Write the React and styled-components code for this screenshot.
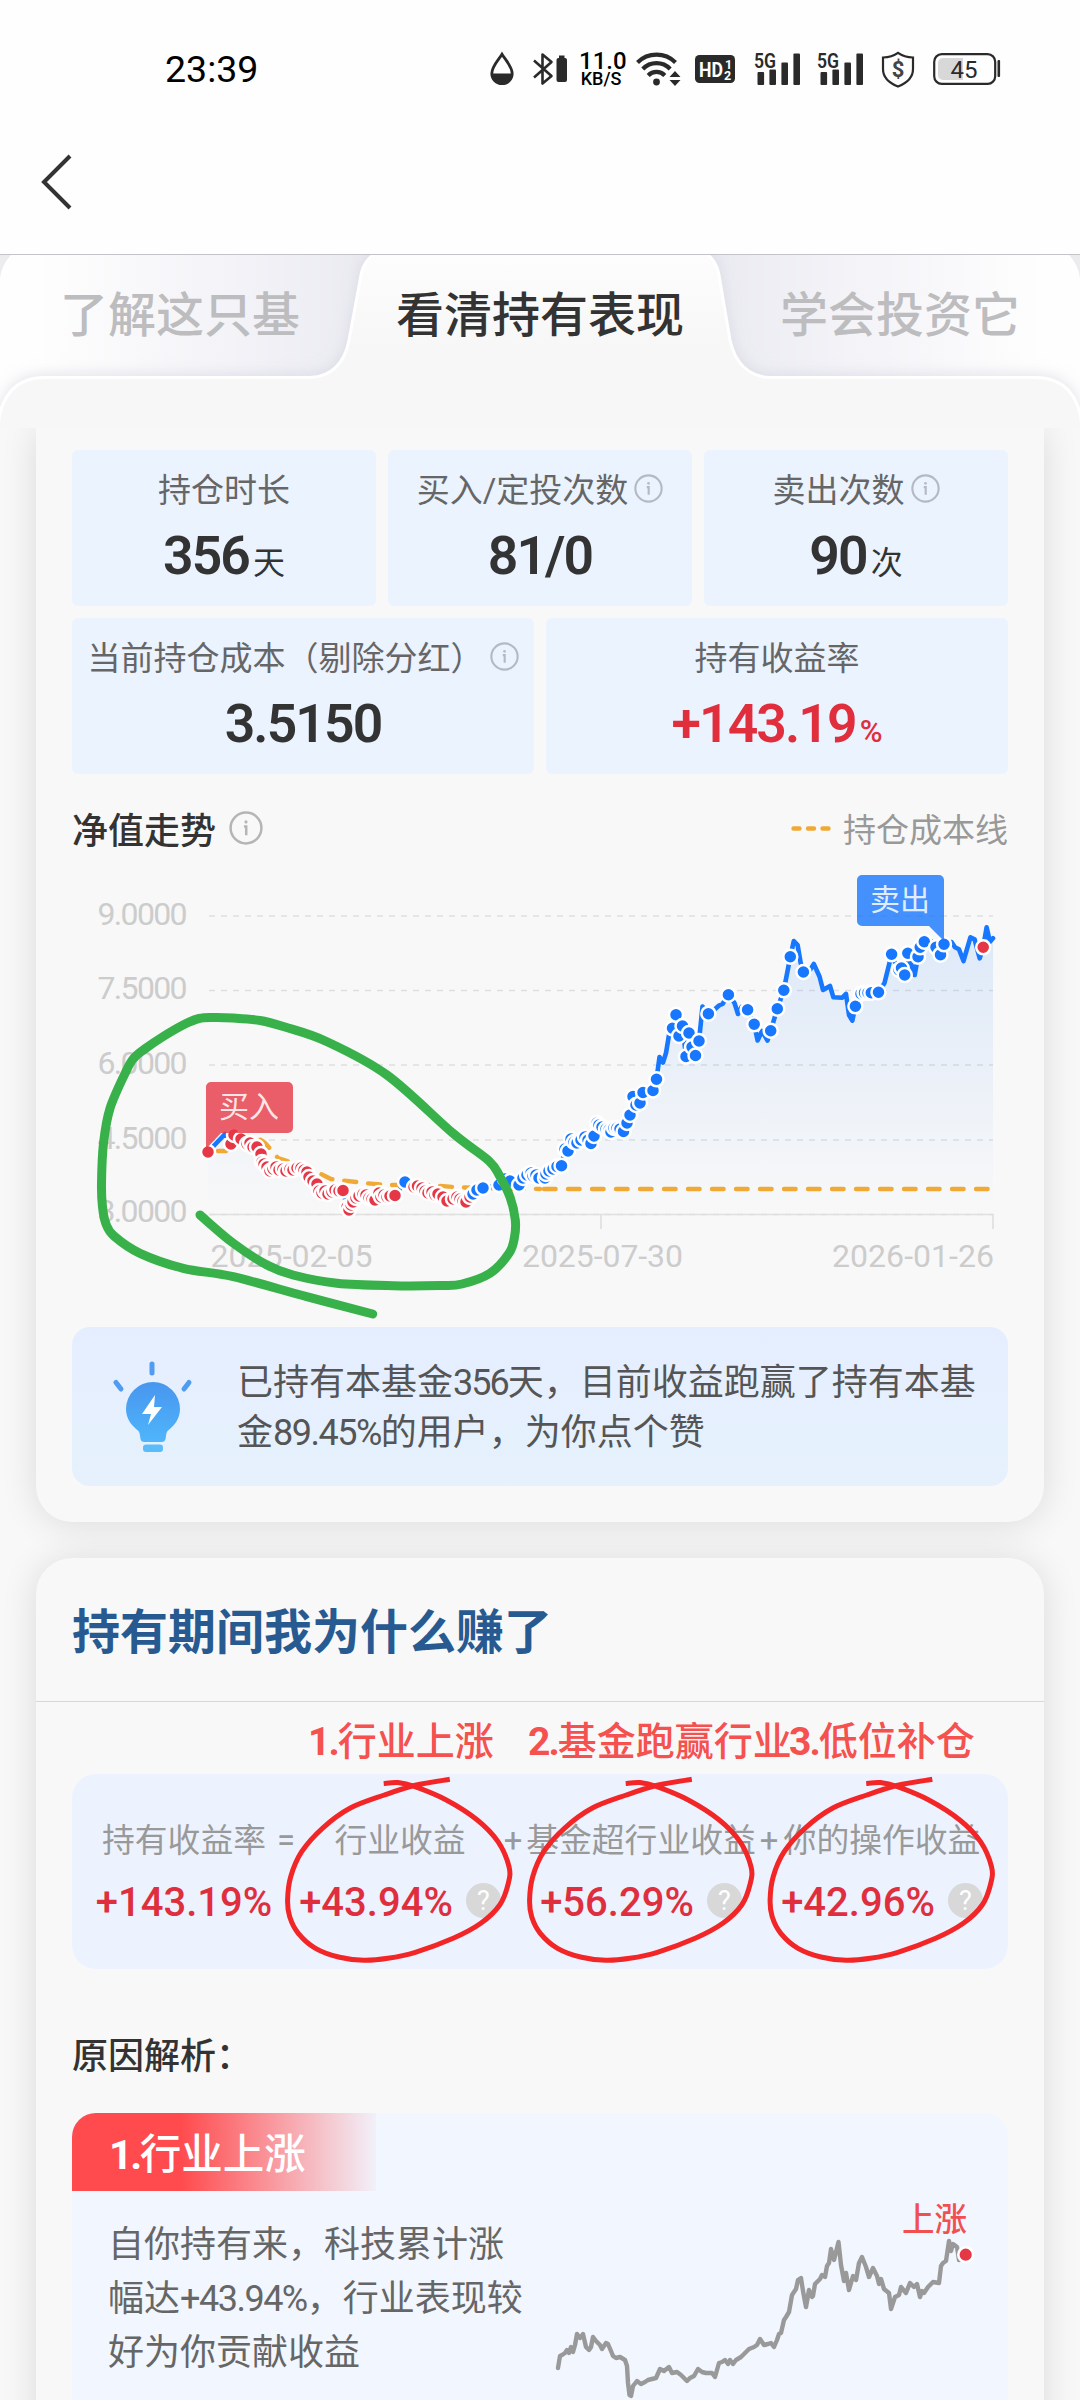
import styled, { createGlobalStyle } from "styled-components";

const GlobalStyle = createGlobalStyle`
  * {
    box-sizing: border-box;
  }

  body {
    margin: 0;
    background: #f7f7f7;
    color: #333;
    font-family: Roboto, "Noto Sans CJK SC", sans-serif;
  }

  svg {
    display: block;
    flex: none;
    overflow: visible;
  }
`;

/* ---------- layout ---------- */

const Page = styled.div`
  width: 1080px;
  height: 2400px;
  overflow: hidden;
  background: #f8f8f8;
`;

const Header = styled.header`
  height: 255px;
  background: #fefefe;
  border-bottom: 1px solid #c4c4c8;
`;

const StatusBar = styled.div`
  display: flex;
  align-items: center;
  height: 138px;
  padding-left: 165px;
`;

const Time = styled.span`
  width: 325px;
  font-size: 37.5px;
  font-weight: 450;
  color: #000;
`;

const StatusItem = styled.div`
  margin-left: ${(props) => props.$gap || 0}px;
`;

const NetSpeed = styled.div`
  width: 44px;
  margin-left: 11px;
  text-align: center;
  color: #000;
  font-size: 24px;
  font-weight: 500;
  line-height: 20px;
  white-space: nowrap;
`;

const NetUnit = styled.div`
  font-size: 18px;
  line-height: 16px;
`;

const NavBar = styled.div`
  display: flex;
  padding: 18px 0 0 41px;
`;

const TabBar = styled.nav`
  position: relative;
  z-index: 1;
  height: 173px;
  background: #ececee;
`;

const TabShape = styled.svg`
  position: absolute;
  inset: 0;
  overflow: hidden;
`;

const TabList = styled.div`
  position: relative;
  display: grid;
  grid-template-columns: repeat(3, 360px);
  height: 112px;
  align-items: center;
`;

const Tab = styled.span`
  text-align: center;
  font-size: 48px;
  font-weight: 500;
  color: ${(props) => (props.$active ? "#333" : "#bdbdbf")};
`;

const Card = styled.section`
  position: relative;
  margin: 0 36px 36px;
  background: #f8f8f8;
  border-radius: ${(props) => (props.$scrolled ? "0 0 36px 36px" : "36px")};
  box-shadow: 0 2px 36px rgba(0, 0, 0, 0.12);
  padding: ${(props) => (props.$scrolled ? "22px 36px 36px" : "0")};
`;

/* ---------- stats ---------- */

const StatGrid = styled.div`
  display: grid;
  grid-template-columns: repeat(6, 1fr);
  gap: 12px;
`;

const StatBox = styled.div`
  grid-column: span ${(props) => props.$span};
  height: 156px;
  padding-top: 16px;
  border-radius: 6px;
  background: #ebf3ff;
  text-align: center;
`;

const StatLabel = styled.div`
  display: flex;
  justify-content: center;
  align-items: center;
  gap: 6px;
  height: 44px;
  font-size: 33px;
  color: #666;
  white-space: nowrap;
`;

const StatValue = styled.div`
  display: flex;
  justify-content: center;
  align-items: baseline;
  height: 70px;
  line-height: 70px;
  margin-top: 11px;
  color: ${(props) => (props.$up ? "#e02e3d" : "#333")};
`;

const StatNumber = styled.span`
  font-size: 53.5px;
  font-weight: 600;
  letter-spacing: -1.9px;
`;

const StatUnit = styled.span`
  margin-left: 4px;
  font-size: ${(props) => (props.$small ? 31 : 32)}px;
  font-weight: ${(props) => (props.$small ? 500 : 400)};
`;

/* ---------- trend ---------- */

const TrendHead = styled.div`
  display: flex;
  align-items: center;
  justify-content: space-between;
  height: 48px;
  margin: 30px 0 2px;
`;

const TrendTitle = styled.h3`
  display: flex;
  align-items: center;
  gap: 13px;
  margin: 0;
  font-size: 36px;
  font-weight: 500;
`;

const Legend = styled.div`
  display: flex;
  align-items: center;
  gap: 12px;
  font-size: 33px;
  color: #999;
`;

const Tip = styled.div`
  display: flex;
  align-items: center;
  height: 159px;
  padding-left: 39px;
  border-radius: 18px;
  background: linear-gradient(#e5eeff, #e6f1fd);
`;

const TipText = styled.p`
  width: 746px;
  margin: 3px 0 0 44px;
  font-size: 36px;
  line-height: 50px;
  color: #555;
`;

const Narrow = styled.span`
  letter-spacing: ${(props) => props.$by || -2}px;
`;

/* ---------- reasons ---------- */

const CardTitle = styled.h2`
  height: 144px;
  margin: 0;
  padding: 3px 0 0 36px;
  border-bottom: 1px solid #d6d7d9;
  font-size: 48px;
  font-weight: 700;
  line-height: 143px;
  color: #285a92;
`;

const CardBody = styled.div`
  position: relative;
  padding: 0 36px;
`;

const Notes = styled.div`
  display: grid;
  grid-template-columns: 220px 261px auto;
  height: 72px;
  padding-left: 236px;
  align-items: center;
  color: #f4514f;
  font-size: 39px;
  font-weight: 500;
  white-space: nowrap;

  b {
    font-weight: 700;
    letter-spacing: -2px;
  }
`;

const Formula = styled.div`
  display: flex;
  height: 195px;
  padding: 43px 0 0 24px;
  border-radius: 24px;
  background: #ecf3ff;
`;

const Term = styled.div`
  display: flex;
  flex-direction: column;
  align-items: center;
  width: ${(props) => props.$width}px;
`;

const TermLabel = styled.span`
  font-size: 32.8px;
  line-height: 48px;
  color: #999;
  white-space: nowrap;
`;

const TermValue = styled.div`
  display: flex;
  align-items: center;
  gap: 13px;
  margin-top: 14px;
  font-size: 40px;
  font-weight: 500;
  line-height: 48px;
  color: #df2f3e;
`;

const HelpDot = styled.span`
  width: 35px;
  height: 35px;
  margin-top: -5px;
  border-radius: 50%;
  background: #d8d8d8;
  color: #fff;
  font-size: 27px;
  font-weight: 400;
  line-height: 36px;
  text-align: center;
`;

const Scribbles = styled.svg`
  position: absolute;
  left: 0;
  top: 0;
`;

const ReasonHeading = styled.h3`
  height: 144px;
  margin: 0;
  padding-top: 29px;
  font-size: 36px;
  font-weight: 500;
  line-height: 118px;
`;

const Reason = styled.div`
  height: 420px;
  border-radius: 24px;
  background: #f1f6ff;
  overflow: hidden;
`;

const ReasonTag = styled.div`
  width: 304px;
  height: 78px;
  padding-left: 37px;
  background: linear-gradient(90deg, #ff4b4e 36%, rgba(255, 75, 78, 0.03));
  color: #fff;
  font-size: 41.5px;
  font-weight: 500;
  line-height: 84px;

  b {
    font-weight: 700;
    letter-spacing: -2.5px;
  }
`;

const ReasonBody = styled.div`
  display: flex;
  align-items: flex-start;
  padding-left: 36px;
`;

const ReasonText = styled.p`
  width: 424px;
  margin: 27px 0 0;
  font-size: 36px;
  line-height: 54px;
  color: #666;
`;

/* ---------- data ---------- */

// "b" buy dot, "s" sell dot, no mark means the line only
const trend = [
  [208, 1152, "b"], [225, 1134], [231, 1144, "b"], [234, 1135, "b"],
  [241, 1139, "b"], [247, 1144, "b"], [250, 1143, "b"], [253, 1147, "b"],
  [257, 1147, "b"], [261, 1154, "b"], [262, 1162, "b"], [264, 1164, "b"],
  [267, 1167, "b"], [270, 1171, "b"], [273, 1169, "b"], [276, 1167, "b"],
  [279, 1170, "b"], [283, 1169, "b"], [286, 1171, "b"], [290, 1169, "b"],
  [293, 1170, "b"], [297, 1168, "b"], [301, 1168, "b"], [304, 1170, "b"],
  [307, 1172, "b"], [309, 1177, "b"], [313, 1181, "b"], [317, 1184, "b"],
  [319, 1191, "b"], [322, 1193, "b"], [325, 1191, "b"], [328, 1194, "b"],
  [332, 1192, "b"], [335, 1190, "b"], [339, 1191, "b"], [343, 1190.5, "b"],
  [347, 1207, "b"], [349, 1210, "b"], [351, 1205, "b"], [353, 1202, "b"],
  [356, 1198, "b"], [359, 1196, "b"], [363, 1194, "b"], [366, 1195, "b"],
  [369, 1198, "b"], [372, 1199, "b"], [375, 1200, "b"], [379, 1193, "b"],
  [381, 1197, "b"], [384, 1195, "b"], [387, 1197, "b"], [390, 1196, "b"],
  [395, 1195.5, "b"], [405, 1182, "s"], [414, 1187, "b"], [417.5, 1186, "b"],
  [422, 1188, "b"], [425, 1191, "b"], [428, 1193, "b"], [432, 1192, "b"],
  [435, 1195, "b"], [438, 1194, "b"], [443, 1197, "b"], [447, 1201, "b"],
  [453, 1199, "b"], [457, 1197, "b"], [460, 1199, "b"], [463, 1201, "b"],
  [466, 1202, "b"], [470, 1197, "b"], [473, 1194, "s"], [477, 1190, "s"],
  [483, 1188, "s"], [499, 1185, "s"], [505, 1179, "s"], [510, 1181, "s"],
  [519, 1185, "s"], [523, 1178, "s"], [527, 1175, "s"], [531, 1173, "s"],
  [533, 1176, "s"], [536, 1175, "s"], [539, 1178, "s"], [545, 1178, "s"],
  [546, 1174, "s"], [549, 1171, "s"], [553, 1169, "s"], [557, 1166.5, "s"],
  [561.5, 1165.7, "s"], [565, 1149, "s"], [568, 1151, "s"], [571, 1139, "s"],
  [574, 1142, "s"], [577, 1143, "s"], [581, 1140, "s"], [585, 1137, "s"],
  [588, 1140, "s"], [591, 1143.5, "s"], [594, 1136, "s"], [597, 1123, "s"],
  [599, 1125, "s"], [602, 1127, "s"], [606, 1129, "s"], [609, 1130, "s"],
  [611, 1132, "s"], [614, 1128, "s"], [617, 1128, "s"], [620, 1129, "s"],
  [623.5, 1131.5, "s"], [627, 1123, "s"], [630, 1115, "s"], [633, 1096.5, "s"],
  [636, 1105, "s"], [640, 1103, "s"], [643, 1092.5, "s"], [653, 1090.5, "s"],
  [656.5, 1079.3, "s"], [659.5, 1057], [663, 1062.5], [666, 1053], [669, 1035],
  [672.5, 1028.3, "s"], [676, 1014.7, "s"], [679, 1036, "s"], [682.5, 1026, "s"],
  [686, 1056.5, "s"], [689, 1033, "s"], [692, 1047, "s"], [695.5, 1055.5, "s"],
  [699, 1041, "s"], [702.5, 1006.5], [708.4, 1013.7, "s"], [714, 1010],
  [719, 1005.5], [722.5, 1004], [728.4, 994.7, "s"], [734.5, 1003],
  [738, 1014], [741.5, 1007], [747.6, 1009.7, "s"], [754.2, 1024.3, "s"],
  [757.6, 1040.5], [762, 1031], [767.5, 1040.5], [770.7, 1030.7, "s"],
  [777.3, 1008.7, "s"], [783.8, 990.3, "s"], [790.3, 956.7, "s"], [793.8, 941],
  [797.6, 945], [800.7, 963], [803.4, 972, "s"], [810, 970], [813.8, 964],
  [819.6, 976.7], [823, 990], [830, 986], [833.4, 997.3], [842.3, 997.7],
  [846, 994], [849, 1015], [852.3, 1020.7], [855.4, 1006.3, "s"],
  [861, 993.7, "s"], [864.5, 992.7, "s"], [868, 992.7, "s"], [871.3, 992.7, "s"],
  [878.5, 992.3, "s"], [884.5, 983], [891.6, 954.3, "s"], [895, 962],
  [899, 970, "s"], [901.5, 968, "s"], [904.7, 975, "s"], [907.8, 953.3, "s"],
  [914.7, 975], [918, 956.7, "s"], [920.2, 947.3, "s"], [924.3, 941.7, "s"],
  [931, 941], [936, 947.3, "s"], [940.5, 954.7, "s"], [944, 944.3, "s"],
  [951.5, 942], [955, 947.3], [959, 949.3], [963.5, 961], [970.4, 937.3],
  [974.6, 939.3], [979.7, 958.3], [983.2, 947.3, "b"], [986.6, 927.3],
  [990, 941.7], [993, 938.3],
];

const industry =
  "558,2368 560,2356 562,2355 565,2353 567,2350 569,2353 571,2347 573,2352 575,2345 577,2334 580,2338 583,2334 586,2347 589,2350 591,2347 593,2337 596,2341 600,2345 602,2349 606,2343 608,2344 611,2351 613,2356 616,2358 620,2357 625,2360 627,2366 628,2383 629.5,2395 631,2396 633,2386 637,2381 641,2384 645,2382 648,2380 652,2379 656,2378 660,2369 664,2371 669,2367 672,2373 677,2372 681,2375 684,2378 687,2381 690,2378 694,2376 698,2369 702,2372 706,2373 712,2373 715,2377 719,2363 722,2362 725,2360 728,2364 730,2360 733,2364 736,2360 741,2357 745,2353 749,2349 754,2347 757,2345 760,2339 764,2345 768,2344 771,2343 774,2347 777,2340 779,2334 781,2333 784,2320 786,2317 789,2312 792,2295 796,2289 798,2280 801,2278 803,2291 806,2307 809,2290 812,2297 813,2296 815,2284 820,2279 822,2275 825,2277 827,2266 829,2263 831,2249 834,2260 838.5,2242 841,2265 844,2281 846,2273 849,2290 853,2276 856,2280 859,2263 862,2257 866,2267 869,2277 873,2268 877,2276 879,2284 881,2279 884,2289 889,2293 891,2309 895,2297 899,2295 901,2287 906,2293 910,2283 914,2287 917,2284 920,2297 922,2291 924,2293 928,2287 933,2282 939,2283 941,2266 943,2263 946,2261 949,2241 951,2251 953,2244 957,2247 959,2260";

const yAxis = [
  { label: "9.0000", text: 925, line: 916 },
  { label: "7.5000", text: 999, line: 990.5 },
  { label: "6.0000", text: 1074, line: 1065 },
  { label: "4.5000", text: 1149, line: 1140 },
  { label: "3.0000", text: 1222, line: 1214.5 },
];

const greenLoop = [
  [200, 1215], [233, 1243], [267, 1265], [293, 1275], [337, 1283.3],
  [393, 1285.7], [440, 1285.5], [462, 1284], [490, 1273.3], [509, 1253.3],
  [514.5, 1237], [515.3, 1220], [510, 1197], [500, 1176.7], [489, 1161],
  [453, 1133.3], [387, 1075], [327, 1041.7], [285, 1027], [260, 1020.5],
  [233, 1018], [213, 1017.5], [199, 1018.5], [185, 1024], [164, 1036],
  [144, 1049.5], [134, 1058], [126.7, 1070], [110, 1108.3], [103.5, 1143.3],
  [101.5, 1183.3], [102.5, 1207], [106, 1224], [114, 1236], [140, 1253.3],
  [183.3, 1268.3], [233.3, 1276.7], [306.7, 1296.7], [372.7, 1314],
];

const redLoop = [
  [383.7, 1783.5], [398, 1782.5], [415, 1786.7], [446.3, 1800], [477.3, 1820],
  [498, 1841.7], [509, 1866.7], [508.3, 1883.3], [499.7, 1905],
  [480.8, 1923.3], [453.2, 1938.3], [415.3, 1952.3], [387.8, 1958.3],
  [363.7, 1960.3], [339.6, 1957.3], [315.5, 1948.3], [298.3, 1933.3],
  [289.7, 1916.7], [287.6, 1900], [290.7, 1876.7], [301.7, 1851.7],
  [322.4, 1828.3], [349.9, 1808.3], [384.4, 1795], [415.3, 1785.3],
  [449.8, 1779.3],
];

// smooth curve through the points of a hand-drawn stroke
function smooth(points) {
  let d = `M${points[0].join(" ")}`;
  for (let i = 0; i < points.length - 1; i++) {
    const p0 = points[i - 1] || points[i];
    const p1 = points[i];
    const p2 = points[i + 1];
    const p3 = points[i + 2] || p2;
    const c1 = [p1[0] + (p2[0] - p0[0]) / 6, p1[1] + (p2[1] - p0[1]) / 6];
    const c2 = [p2[0] - (p3[0] - p1[0]) / 6, p2[1] - (p3[1] - p1[1]) / 6];
    d += `C${c1.join(" ")} ${c2.join(" ")} ${p2.join(" ")}`;
  }
  return d;
}

/* ---------- icons ---------- */

function InfoIcon({ size = 29, color = "#b4bac4" }) {
  return (
    <svg width={size} height={size} viewBox="0 0 30 30" fill="none">
      <circle cx="15" cy="15" r="13.6" stroke={color} strokeWidth="2.2" />
      <circle cx="15" cy="9.6" r="1.4" fill={color} />
      <path d="M13.2 13.6h2v7.8" stroke={color} strokeWidth="2.2" />
    </svg>
  );
}

function SignalIcon() {
  return (
    <svg width="46" height="34" viewBox="0 0 46 34" fill="#2a2a2a">
      <text x="0" y="16" fontSize="21" fontWeight="600" textLength="22" lengthAdjust="spacingAndGlyphs">
        5G
      </text>
      <rect x="3.5" y="20" width="6.6" height="13" rx="1" />
      <rect x="15.4" y="17.5" width="6.6" height="15.5" rx="1" />
      <rect x="27.4" y="10.5" width="6.6" height="22.5" rx="1" />
      <rect x="39.4" y="1.5" width="6.6" height="31.5" rx="1" />
    </svg>
  );
}

function StatusIcons() {
  return (
    <>
      <StatusItem>
        <svg width="24" height="34" viewBox="0 0 24 34">
          <path
            d="M12 2.2C8.5 8 1.8 14.5 1.8 21.5a10.2 10.2 0 0 0 20.4 0C22.2 14.5 15.5 8 12 2.2Z"
            fill="none"
            stroke="#2a2a2a"
            strokeWidth="2.8"
          />
          <path d="M1.5 21.5h21a10.5 10.5 0 0 1-21 0Z" fill="#2a2a2a" />
        </svg>
      </StatusItem>
      <StatusItem $gap={19}>
        <svg width="35" height="34" viewBox="0 0 35 34">
          <path
            d="M1 8.5 18.500 24 9.500 31.500v-29L18.500 10 1 25.500"
            fill="none"
            stroke="#2a2a2a"
            strokeWidth="2.6"
            strokeLinejoin="round"
          />
          <rect x="23.5" y="6" width="10.5" height="24" rx="2" fill="#2a2a2a" />
          <rect x="26" y="3.5" width="5.5" height="3" fill="#2a2a2a" />
        </svg>
      </StatusItem>
      <NetSpeed>
        11.0
        <NetUnit>KB/S</NetUnit>
      </NetSpeed>
      <StatusItem $gap={13}>
        <svg width="45" height="36" viewBox="0 0 45 36">
          <g fill="none" stroke="#2a2a2a" strokeWidth="4.2">
            <path d="M1.500 11.500a27 27 0 0 1 38 0" />
            <path d="M6.800 18a19 19 0 0 1 27.400 0" />
            <path d="M12.200 24.500a11.500 11.500 0 0 1 16.600 0" />
          </g>
          <circle cx="20.5" cy="31" r="3.4" fill="#2a2a2a" />
          <path d="M33.500 26 39 20l5.500 6ZM33.500 29 39 35l5.500-6Z" fill="#2a2a2a" />
        </svg>
      </StatusItem>
      <StatusItem $gap={14}>
        <svg width="40" height="28" viewBox="0 0 40 28">
          <rect width="40" height="28" rx="4.5" fill="#2a2a2a" />
          <g fill="#fff" fontWeight="700">
            <text x="4" y="21.5" fontSize="20.5" textLength="24" lengthAdjust="spacingAndGlyphs">
              HD
            </text>
            <text x="30" y="13.5" fontSize="12.5">1</text>
            <text x="29" y="24.5" fontSize="12.5">2</text>
          </g>
        </svg>
      </StatusItem>
      <StatusItem $gap={19}>
        <SignalIcon />
      </StatusItem>
      <StatusItem $gap={17}>
        <SignalIcon />
      </StatusItem>
      <StatusItem $gap={18}>
        <svg width="34" height="37" viewBox="0 0 34 37">
          <path
            d="M17 1.800C12.500 5 7.500 6.300 2 6.500V18c0 8.500 6 14 15 17.500C26 32 32 26.500 32 18V6.500C26.500 6.300 21.500 5 17 1.800Z"
            fill="none"
            stroke="#2a2a2a"
            strokeWidth="2.2"
          />
          <text x="17" y="26" fontSize="22" fontWeight="700" fill="#444" textAnchor="middle">
            $
          </text>
        </svg>
      </StatusItem>
      <StatusItem $gap={18}>
        <svg width="68" height="32" viewBox="0 0 68 32">
          <rect x="1.2" y="1.2" width="61" height="29.6" rx="7.5" fill="none" stroke="#2a2a2a" strokeWidth="2.2" />
          <path d="M30 5H10a5 5 0 0 0-5 5v12a5 5 0 0 0 5 5h20Z" fill="#d8d8d8" />
          <rect x="64.5" y="7" width="2.6" height="17" rx="1" fill="#2a2a2a" />
          <text x="31" y="24.5" fontSize="24" fill="#2a2a2a" textAnchor="middle">
            45
          </text>
        </svg>
      </StatusItem>
    </>
  );
}

function BulbIcon() {
  return (
    <svg width="82" height="94" viewBox="112 1360 82 94">
      <defs>
        <linearGradient id="bulb" x1="0" y1="0" x2="0" y2="1">
          <stop offset="0" stopColor="#4896ee" />
          <stop offset="1" stopColor="#4fb5fc" />
        </linearGradient>
      </defs>
      <g stroke="#4f9cf0" strokeWidth="5" strokeLinecap="round">
        <path d="M153 1364v9M117 1382.500l5 6.500M190 1382.500l-5 6.500" />
      </g>
      <path
        d="M154 1382a27 27 0 0 0-27 27c0 10 6 17 12.500 22 1.500 2 1.500 5 2 8q.5 3 4 3h17q3.500 0 4-3c.5-3 .5-6 2-8 6.500-5 12.500-12 12.500-22a27 27 0 0 0-27-27Z"
        fill="url(#bulb)"
      />
      <rect x="144" y="1444.5" width="20" height="7.5" rx="3" fill="#5bbcfa" />
      <path d="M156 1395l-13 19h9l-3 11 14-18h-8Z" fill="#fff" />
    </svg>
  );
}

/* ---------- sections ---------- */

function Tabs() {
  return (
    <TabBar>
      <TabShape width="1080" height="173" viewBox="0 255 1080 173">
        <defs>
          <linearGradient id="tabLeft" x1="0" x2="1">
            <stop offset="0.1" stopColor="#fefefe" />
            <stop offset="0.6" stopColor="#f3f3f8" />
            <stop offset="1" stopColor="#e9eaf0" />
          </linearGradient>
          <linearGradient id="tabRight" x1="1" x2="0">
            <stop offset="0.1" stopColor="#fefefe" />
            <stop offset="0.6" stopColor="#f3f3f8" />
            <stop offset="1" stopColor="#e9eaf0" />
          </linearGradient>
          <linearGradient id="tabFront" x1="0" y1="0" x2="0" y2="1">
            <stop offset="0" stopColor="#fdfdfd" />
            <stop offset="0.5" stopColor="#f7f7f8" />
            <stop offset="1" stopColor="#f7f7f8" />
          </linearGradient>
          <filter id="tabShadow" x="-5%" y="-20%" width="110%" height="140%">
            <feDropShadow dx="0" dy="-2" stdDeviation="7" floodColor="#c9cad8" floodOpacity="0.5" />
          </filter>
        </defs>
        <path d="M0 428V278Q2 262 16 250H385V428Z" fill="url(#tabLeft)" />
        <path d="M1080 428V278Q1078 262 1064 250H695V428Z" fill="url(#tabRight)" />
        <path
          d="M-2 440V424Q4 378 44 377.500H310Q342 376 349 340L361 275Q364 258 380 251H702Q716 258 719 275L730 340Q738 376 770 377.500H1036Q1076 378 1082 424V440Z"
          fill="url(#tabFront)"
          stroke="#fff"
          strokeWidth="3"
          filter="url(#tabShadow)"
        />
      </TabShape>
      <TabList>
        <Tab>了解这只基</Tab>
        <Tab $active>看清持有表现</Tab>
        <Tab>学会投资它</Tab>
      </TabList>
    </TabBar>
  );
}

function Stat({ span, label, info, value, unit, up }) {
  return (
    <StatBox $span={span}>
      <StatLabel>
        {label}
        {info && <InfoIcon />}
      </StatLabel>
      <StatValue $up={up}>
        <StatNumber>{value}</StatNumber>
        {unit && <StatUnit $small={up}>{unit}</StatUnit>}
      </StatValue>
    </StatBox>
  );
}

function TrendChart() {
  const line = trend.map(([x, y]) => `${x},${y}`).join(" ");

  return (
    <svg width="936" height="473" viewBox="72 854 936 473">
      <defs>
        <linearGradient id="area" x1="0" y1="927" x2="0" y2="1214" gradientUnits="userSpaceOnUse">
          <stop offset="0" stopColor="#1777ff" stopOpacity="0.12" />
          <stop offset="1" stopColor="#1777ff" stopOpacity="0" />
        </linearGradient>
      </defs>

      {yAxis.map(({ label, text, line: y }) => (
        <g key={label}>
          <text x="187.5" y={text} textAnchor="end" fontSize="32" fill="#ccc" textLength="90">
            {label}
          </text>
          <path d={`M209 ${y}H993`} stroke="#dedede" strokeWidth="1.7" strokeDasharray="6 6" />
        </g>
      ))}
      <path d="M209 1214.500H993V1229M601 1214.500V1229" fill="none" stroke="#e0e0e0" strokeWidth="1.7" />
      <g fontSize="32" fill="#ccc">
        <text x="210.5" y="1267" textLength="162">2025-02-05</text>
        <text x="522" y="1267" textLength="161">2025-07-30</text>
        <text x="832" y="1267" textLength="162">2026-01-26</text>
      </g>

      <polygon points={`${line} 993,1214 208,1214`} fill="url(#area)" />
      <g fill="none" stroke="#f0a935" strokeWidth="4.4" strokeLinecap="round">
        <path
          d="M218 1151H226L240 1138Q256 1134 266 1144L278 1158L313 1170L331 1179L364 1183L388 1185L430 1185L460 1187.500L540 1189"
          strokeDasharray="12 12"
        />
        <path d="M544 1189H991" strokeDasharray="11.600 12.400" />
      </g>
      <polyline points={line} fill="none" stroke="#1777ff" strokeWidth="4.6" strokeLinejoin="round" strokeLinecap="round" />
      {trend.map(
        ([x, y, mark], i) =>
          mark && (
            <circle
              key={i}
              cx={x}
              cy={y}
              r="7"
              fill={mark === "b" ? "#e63746" : "#1777ff"}
              stroke="#fff"
              strokeWidth="2.5"
            />
          )
      )}

      <g fontSize="30" fill="#fff" fillOpacity="0.85">
        <path
          d="M211 1082H288a5 5 0 0 1 5 5V1128a5 5 0 0 1-5 5H221L206 1149V1087a5 5 0 0 1 5-5Z"
          fill="#e63746"
          fillOpacity="0.8"
        />
        <text x="219" y="1116.5">买入</text>
        <path
          d="M862 875H939a5 5 0 0 1 5 5V941L929 926H862a5 5 0 0 1-5-5V880a5 5 0 0 1 5-5Z"
          fill="#1777ff"
          fillOpacity="0.8"
        />
        <text x="870" y="909.5">卖出</text>
      </g>

      <path d={smooth(greenLoop)} fill="none" stroke="#38b14a" strokeWidth="9" strokeLinecap="round" />
    </svg>
  );
}

function IndustryChart() {
  return (
    <svg width="436" height="209" viewBox="532 2191 436 209">
      <polyline points={industry} fill="none" stroke="#999" strokeWidth="4.4" strokeLinejoin="round" strokeLinecap="round" />
      <circle cx="965.7" cy="2254.7" r="7.4" fill="#e63746" stroke="#fff" strokeWidth="2.6" />
      <text x="902" y="2231" fontSize="32.5" fontWeight="500" fill="#f05050">
        上涨
      </text>
    </svg>
  );
}

function App() {
  return (
    <Page>
      <GlobalStyle />
      <Header>
        <StatusBar>
          <Time>23:39</Time>
          <StatusIcons />
        </StatusBar>
        <NavBar>
          <svg width="32" height="52" viewBox="0 0 32 52">
            <path d="M29 0 3 26l26 26" fill="none" stroke="#333" strokeWidth="4" />
          </svg>
        </NavBar>
      </Header>
      <Tabs />

      <Card $scrolled>
        <StatGrid>
          <Stat span={2} label="持仓时长" value="356" unit="天" />
          <Stat span={2} label="买入/定投次数" info value="81/0" />
          <Stat span={2} label="卖出次数" info value="90" unit="次" />
          <Stat span={3} label="当前持仓成本（剔除分红）" info value="3.5150" />
          <Stat span={3} label="持有收益率" value="+143.19" unit="%" up />
        </StatGrid>

        <TrendHead>
          <TrendTitle>
            净值走势
            <InfoIcon size={34} color="#b5b5b5" />
          </TrendTitle>
          <Legend>
            <svg width="40" height="5" viewBox="0 0 40 5">
              <path d="M2.500 2.500H40" stroke="#f0a935" strokeWidth="4.4" strokeLinecap="round" strokeDasharray="6 8.500" />
            </svg>
            持仓成本线
          </Legend>
        </TrendHead>
        <TrendChart />

        <Tip>
          <BulbIcon />
          <TipText>
            已持有本基金<Narrow>356</Narrow>天，目前收益跑赢了持有本基金
            <Narrow $by={-1.5}>89.45%</Narrow>的用户，为你点个赞
          </TipText>
        </Tip>
      </Card>

      <Card>
        <CardTitle>持有期间我为什么赚了</CardTitle>
        <CardBody>
          <Notes>
            <span><b>1.</b>行业上涨</span>
            <span><b>2.</b>基金跑赢行业</span>
            <span><b>3.</b>低位补仓</span>
          </Notes>
          <Formula>
            <Term $width={176}>
              <TermLabel>持有收益率</TermLabel>
              <TermValue>+143.19%</TermValue>
            </Term>
            <Term $width={28}>
              <TermLabel>=</TermLabel>
            </Term>
            <Term $width={200}>
              <TermLabel>行业收益</TermLabel>
              <TermValue>
                +43.94%<HelpDot>?</HelpDot>
              </TermValue>
            </Term>
            <Term $width={26}>
              <TermLabel>+</TermLabel>
            </Term>
            <Term $width={230}>
              <TermLabel>基金超行业收益</TermLabel>
              <TermValue>
                +56.29%<HelpDot>?</HelpDot>
              </TermValue>
            </Term>
            <Term $width={26}>
              <TermLabel>+</TermLabel>
            </Term>
            <Term $width={200}>
              <TermLabel>你的操作收益</TermLabel>
              <TermValue>
                +42.96%<HelpDot>?</HelpDot>
              </TermValue>
            </Term>
          </Formula>
          <Scribbles width="1008" height="280" viewBox="36 1702 1008 280" fill="none" stroke="#f22626" strokeWidth="5">
            {[0, 242, 482.5].map((x) => (
              <path key={x} d={smooth(redLoop)} transform={`translate(${x} 0)`} />
            ))}
          </Scribbles>

          <ReasonHeading>原因解析：</ReasonHeading>
          <Reason>
            <ReasonTag>
              <b>1.</b>行业上涨
            </ReasonTag>
            <ReasonBody>
              <ReasonText>
                自你持有来，科技累计涨幅达<Narrow $by={-1.5}>+43.94%</Narrow>，行业表现较好为你贡献收益
              </ReasonText>
              <IndustryChart />
            </ReasonBody>
          </Reason>
        </CardBody>
      </Card>
    </Page>
  );
}

export default App;
